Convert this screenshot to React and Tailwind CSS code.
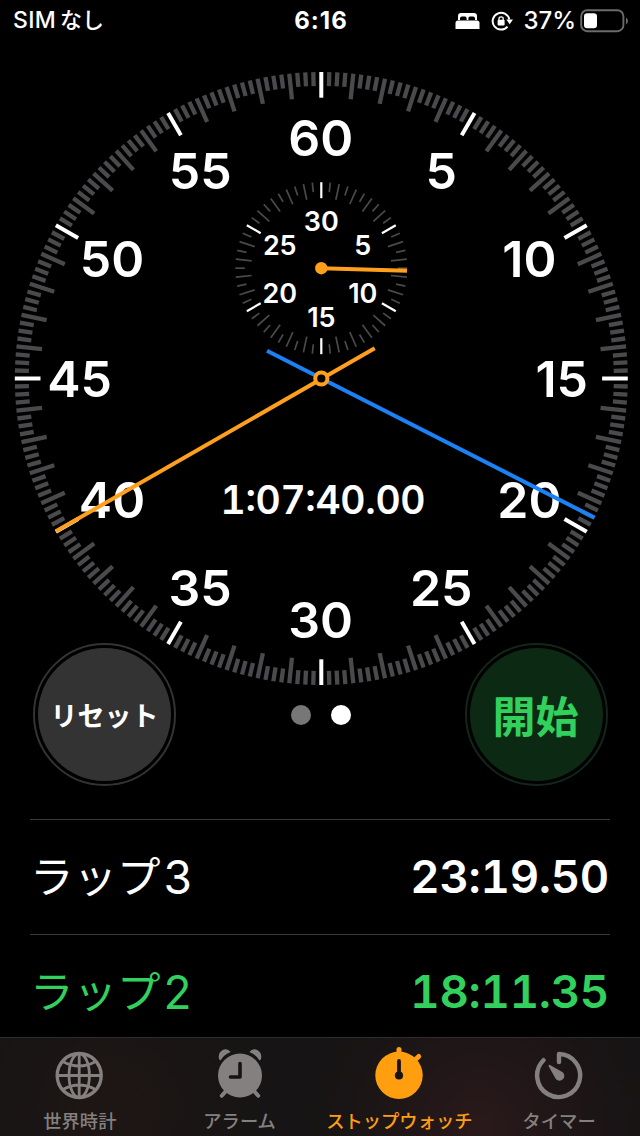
import React from 'react'

const CX = 321.3
const CY = 338.5

const polar = (cx, cy, r, deg) => {
  const a = (deg * Math.PI) / 180
  return [cx + r * Math.sin(a), cy - r * Math.cos(a)]
}

function Tick({ cx, cy, r, length, deg, width, color }) {
  const [x1, y1] = polar(cx, cy, r, deg)
  const [x2, y2] = polar(cx, cy, r - length, deg)
  return <line x1={x1} y1={y1} x2={x2} y2={y2} stroke={color} strokeWidth={width} />
}

function Numbers({ cx, cy, r, items, className, drop, spacing }) {
  return items.map((n, i) => {
    const [x, y] = polar(cx, cy, r, (i * 360) / items.length)
    return (
      <text key={n} x={x + spacing / 2} y={y + drop} letterSpacing={spacing} textAnchor="middle" fill="#fff" className={className}>{n}</text>
    )
  })
}

function Dial() {
  const ticks = Array.from({ length: 240 }, (_, i) => i)
  const subTicks = Array.from({ length: 60 }, (_, i) => i)
  const SY = 228.2
  return (
    <svg width="640" height="660" viewBox="0 0 640 660" className="block shrink-0">
      {ticks.map((i) => {
        const major = i % 20 === 0
        return (
          <Tick key={i} cx={CX} cy={CY} r={306.5} deg={i * 1.5} length={i % 4 === 0 ? 25.7 : 14} width={major ? 4 : 4.3} color={major ? '#fff' : '#4a4a4c'} />
        )
      })}
      {subTicks.map((i) => {
        const major = i % 10 === 0
        return (
          <Tick key={i} cx={CX} cy={SY} r={86} deg={i * 6} length={i % 2 === 0 ? 16 : 9.5} width={major ? 2.2 : 1.7} color={major ? '#fff' : '#4a4a4c'} />
        )
      })}
      <Numbers cx={CX - 0.6} cy={CY} r={241} drop={18.8} spacing={0} items={[60, 5, 10, 15, 20, 25, 30, 35, 40, 45, 50, 55]} className="text-[50px] font-semibold" />
      <Numbers cx={CX} cy={SY + 0.7} r={48} drop={9.8} spacing={-0.1} items={[30, 5, 10, 15, 20, 25]} className="text-[27px] font-semibold" />
      <text x="323" y="474" textAnchor="middle" textLength="205" fill="#fff" className="text-[39px] font-semibold tabular-nums">1:07:40.00</text>

      <line x1={CX} y1={SY} x2="407" y2="230.7" stroke="#ff9f1c" strokeWidth="4" />
      <circle cx={CX} cy={SY} r="6.2" fill="#ff9f1c" />

      <line x1="267" y1="310.7" x2="594.6" y2="477.7" stroke="#1b82f6" strokeWidth="4" />
      <line x1="374.7" y1="308.3" x2="56" y2="491.3" stroke="#ff9f1c" strokeWidth="4" />
      <circle cx={CX} cy={CY} r="6.1" fill="#000" stroke="#ff9f1c" strokeWidth="4" />
    </svg>
  )
}

function StatusBar() {
  return (
    <header className="flex h-[41px] -mb-px shrink-0 items-center text-[23px] text-white">
      <div className="flex flex-1 items-center pl-[13px] font-medium">
        <span className="tracking-[0.3px]">SIM</span>
        <span className="ml-1 text-[22px]">なし</span>
      </div>
      <span className="pl-px text-[24px] font-bold tracking-[1px]">6:16</span>
      <div className="flex flex-1 items-center justify-end pr-3">
        <svg width="26" height="18" viewBox="0 0 26 18" fill="#fff" className="mr-2.5">
          <path d="M3 8V4Q3 1 6 1H19Q22 1 22 4V8H20V6.5Q20 4.5 18 4.5H15Q13.4 4.5 13.4 6.5V8H11.6V6.5Q11.6 4.5 10 4.5H7Q5 4.5 5 6.5V8Z" />
          <path d="M3 8.5H22Q24.5 8.5 24.5 11V17H.5V11Q.5 8.5 3 8.5Z" />
        </svg>
        <svg width="22" height="20" viewBox="0 0 22 20" fill="none" className="mr-2.5">
          <path d="M18.3 8.5A8.4 8.4 0 1 0 16.5 15.6" stroke="#fff" strokeWidth="2" />
          <path d="M15.3 8.5H22L18.7 13.3Z" fill="#fff" />
          <rect x="6.6" y="8.8" width="7" height="5.8" rx="1" fill="#fff" />
          <path d="M8 9.5V7.7Q8 5.8 10.1 5.8T12.2 7.7V9.5" stroke="#fff" strokeWidth="1.3" />
        </svg>
        <span className="mr-1 text-[24px] font-medium">37%</span>
        <svg width="48" height="24" viewBox="0 0 48 24">
          <rect x="1.2" y="1.2" width="42.2" height="21" rx="6" fill="none" stroke="#6b6b6b" strokeWidth="1.9" />
          <rect x="4" y="4.2" width="13" height="15" rx="3.3" fill="#fff" />
          <path d="M46 8.5Q48 9.5 48 12T46 15.5Z" fill="#6b6b6b" />
        </svg>
      </div>
    </header>
  )
}

function Controls() {
  return (
    <div className="-mt-[57px] flex h-[143px] shrink-0 items-center justify-between pl-[33px] pr-8">
      <button className="size-[143px] rounded-full border-2 border-[#333] bg-black p-[3px]">
        <span className="flex size-full items-center justify-center rounded-full bg-[#333] pt-1.5 text-[27px] font-semibold text-white">リセット</span>
      </button>
      <div className="flex gap-5">
        <span className="size-5 rounded-full bg-[#777]" />
        <span className="size-5 rounded-full bg-white" />
      </div>
      <button className="size-[143px] rounded-full border-2 border-[#12261a] bg-black p-[3px]">
        <span className="flex size-full items-center justify-center rounded-full bg-[#0c2a13] pt-1.5 pr-0.5 text-[43px] font-semibold text-[#32d05d]">開始</span>
      </button>
    </div>
  )
}

function Lap({ label, n, time, className }) {
  return (
    <li className={`flex h-[115px] shrink-0 items-center justify-between border-t border-[#38383a] pt-px text-[46px] ${className}`}>
      <span className="flex items-center">
        <span className="text-[43.5px] font-normal">{label}</span>
        <span className="ml-[3px]">{n}</span>
      </span>
      <span className="pr-px text-[45.5px] font-semibold tracking-[-0.3px] tabular-nums">{time}</span>
    </li>
  )
}

function GlobeIcon() {
  return (
    <svg width="52" height="54" viewBox="0 0 52 54" fill="none" stroke="currentColor" strokeWidth="2.8">
      <circle cx="25.2" cy="28.5" r="22" strokeWidth="3.4" />
      <ellipse cx="25.2" cy="28.5" rx="10.2" ry="22" />
      <path d="M25.2 6.5V50.5M3.2 28.5H47.2M8.7 14.5Q25.2 23.5 41.7 14.5M8.7 42.5Q25.2 33.5 41.7 42.5" />
    </svg>
  )
}

function AlarmIcon() {
  return (
    <svg width="52" height="54" viewBox="0 0 52 54" fill="currentColor">
      <circle cx="26" cy="28.5" r="22" />
      <path d="M5.2 12.5Q3.5 6.5 8 3.5Q13 .5 16.7 5Q10 7.5 6.8 13Q5.8 13.8 5.2 12.5ZM46.8 12.5Q48.5 6.5 44 3.5Q39 .5 35.3 5Q42 7.5 45.2 13Q46.2 13.8 46.8 12.5Z" />
      <path d="M12 44L7.8 48.8M40 44L44.2 48.8" stroke="currentColor" strokeWidth="4" strokeLinecap="round" />
      <path d="M26 16.5V30H16.5" fill="none" stroke="#151414" strokeWidth="3.6" strokeLinecap="round" strokeLinejoin="round" />
    </svg>
  )
}

function StopwatchIcon() {
  return (
    <svg width="52" height="54" viewBox="0 0 52 54" fill="currentColor">
      <circle cx="26" cy="28.3" r="23.7" />
      <path d="M26 7V2.5M43 12L45.7 9.5" stroke="currentColor" strokeWidth="5" strokeLinecap="round" />
      <path d="M26 28V14" stroke="#171412" strokeWidth="3.8" strokeLinecap="round" />
      <circle cx="26" cy="28.5" r="4.1" fill="#171412" />
    </svg>
  )
}

function TimerIcon() {
  return (
    <svg width="52" height="54" viewBox="0 0 52 54" fill="none" stroke="currentColor" strokeWidth="4.4" strokeLinejoin="round">
      <path d="M26 15V7A21.5 21.5 0 1 1 10.5 13.2" strokeLinecap="round" />
      <path d="M16.5 18.8L29.2 26.1A3.8 3.8 0 0 1 23.7 31.6Z" fill="currentColor" strokeWidth="2" />
    </svg>
  )
}

const tabs = [
  { label: '世界時計', icon: <GlobeIcon /> },
  { label: 'アラーム', icon: <AlarmIcon /> },
  { label: 'ストップウォッチ', icon: <StopwatchIcon />, active: true },
  { label: 'タイマー', icon: <TimerIcon /> },
]

function TabBar() {
  return (
    <nav className="grid h-[99px] shrink-0 grid-cols-4 border-t border-[#2e2c2c] bg-[#161414] bg-[radial-gradient(circle_at_75%_90%,#2a191b_0%,#1c1516_22%,transparent_36%),radial-gradient(circle_at_17%_70%,#1e1615_0%,transparent_30%)] pr-px">
      {tabs.map((t) => (
        <div key={t.label} className={`flex flex-col items-center pt-[9px] ${t.active ? 'text-[#ff9f0f]' : 'text-[#858080]'}`}>
          {t.icon}
          <span className="mt-1.5 whitespace-nowrap text-[18.3px] leading-7 font-medium">{t.label}</span>
        </div>
      ))}
    </nav>
  )
}

export default function App() {
  return (
    <div lang="ja" className="flex h-[1136px] w-[640px] flex-col overflow-hidden bg-black font-['Inter','Noto_Sans_CJK_JP',sans-serif]">
      <StatusBar />
      <Dial />
      <Controls />
      <ul className="mx-[30px] mt-[33px] flex h-[218px] shrink-0 flex-col overflow-hidden">
        <Lap label="ラップ" n="3" time="23:19.50" className="text-white" />
        <Lap label="ラップ" n="2" time="18:11.35" className="text-[#32d05d]" />
      </ul>
      <TabBar />
    </div>
  )
}
